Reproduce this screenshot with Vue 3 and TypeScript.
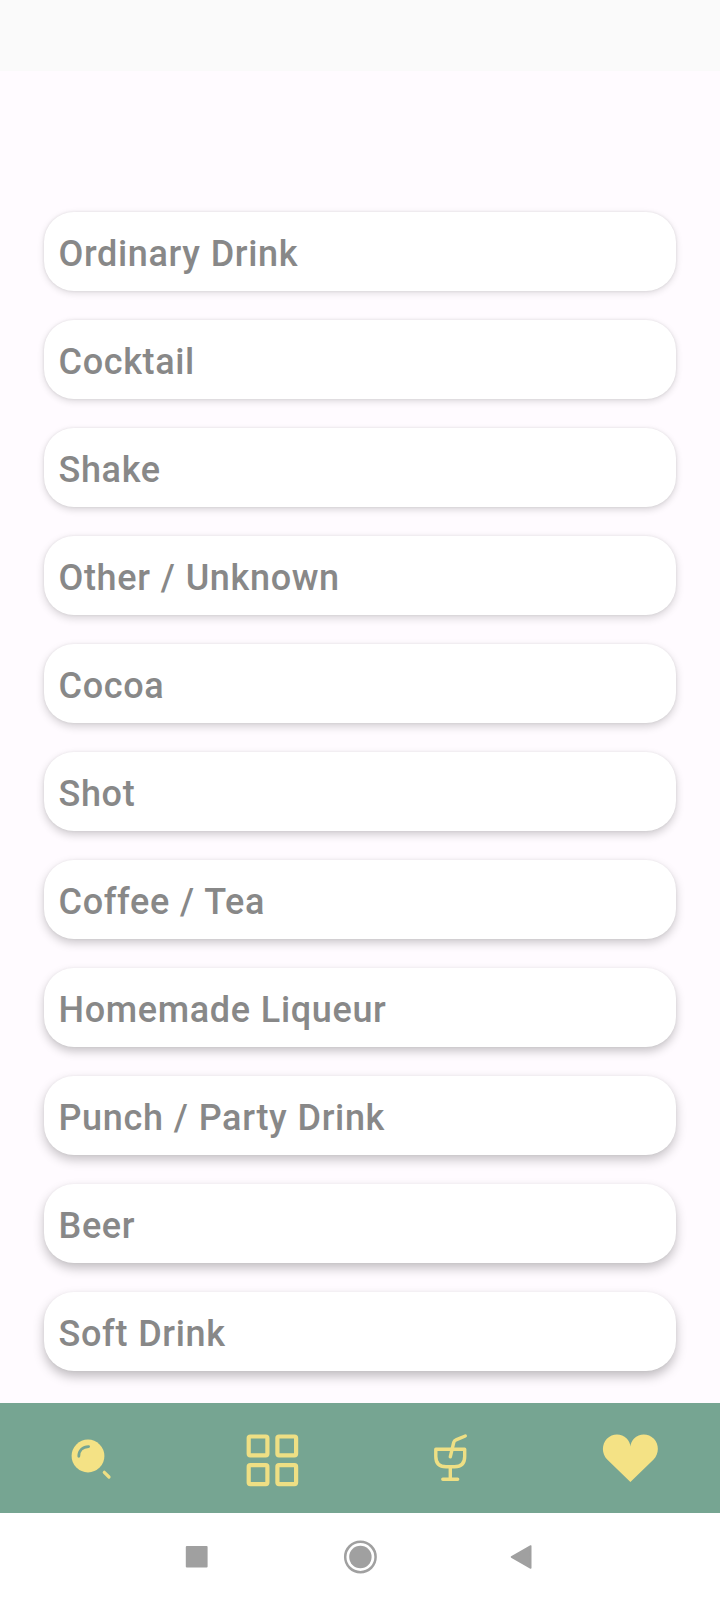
<script setup lang="ts">
const categories: string[] = [
  'Ordinary Drink',
  'Cocktail',
  'Shake',
  'Other / Unknown',
  'Cocoa',
  'Shot',
  'Coffee / Tea',
  'Homemade Liqueur',
  'Punch / Party Drink',
  'Beer',
  'Soft Drink',
]

function cardShadow(index: number): string {
  const t = index / (categories.length - 1)
  const y = 2 + t * 3.5
  const blur = 7 + t * 4
  const alpha = 0.13 + t * 0.12
  return `0 ${y}px ${blur}px rgba(0, 0, 0, ${alpha}), 0 0 3px rgba(0, 0, 0, ${0.09 - t * 0.05})`
}
</script>

<template>
  <div class="screen">
    <div class="status-bar"></div>
    <main class="list">
      <button
        v-for="(name, i) in categories"
        :key="name"
        class="card"
        :style="{ boxShadow: cardShadow(i) }"
      >
        {{ name }}
      </button>
    </main>

    <nav class="tabs">
      <a class="tab" aria-label="Search">
        <svg viewBox="0 0 180 110">
          <circle class="fill" cx="88" cy="53" r="16.4" />
          <path class="shine" d="M78.8 53.3C78.8 47.5 82.8 43.8 88.6 43.6" />
          <path class="line handle" d="M104.3 69.3L109 74" />
        </svg>
      </a>
      <a class="tab" aria-label="Categories">
        <svg viewBox="0 0 180 110">
          <g class="line tiles">
            <rect x="68.7" y="33.5" width="18.7" height="18.9" rx="1.6" />
            <rect x="97.4" y="33.5" width="18.7" height="18.9" rx="1.6" />
            <rect x="68.7" y="62.2" width="18.7" height="18.9" rx="1.6" />
            <rect x="97.4" y="62.2" width="18.7" height="18.9" rx="1.6" />
          </g>
        </svg>
      </a>
      <a class="tab" aria-label="Drinks">
        <svg viewBox="0 0 180 110">
          <g class="line glass">
            <path d="M75.8 46.2H104.7V53.5Q104.7 63.7 94.5 63.7H86Q75.8 63.7 75.8 53.5Z" />
            <path d="M90.3 64V76M82.8 76.3H97.7" />
            <path d="M90.3 53.8L93.7 39.5Q94.2 37.6 96 36.9L105.3 33" />
          </g>
        </svg>
      </a>
      <a class="tab" aria-label="Favourites">
        <svg viewBox="0 0 180 110">
          <path
            class="fill"
            d="M90.4 78.9L67.2 56.5C61.5 50.8 61.6 41.3 66.9 35.8C72.4 30 81.2 30 86.7 35.4C88.8 37.5 90.2 40.3 90.4 43.4C90.6 40.3 92 37.5 94.1 35.4C99.6 30 108.4 30 113.9 35.8C119.2 41.3 119.3 50.8 113.6 56.5Z"
          />
        </svg>
      </a>
    </nav>

    <footer class="system-nav">
      <svg viewBox="0 0 720 87">
        <rect x="185.8" y="33" width="21.8" height="21.6" rx="1" />
        <circle cx="360.4" cy="44" r="11.2" />
        <circle class="ring" cx="360.4" cy="44" r="15.2" />
        <path class="back" d="M511.5 44L530.7 33V55Z" />
      </svg>
    </footer>
  </div>
</template>

<style>
body {
  margin: 0;
}
</style>

<style scoped>
.screen {
  display: flex;
  flex-direction: column;
  width: 720px;
  height: 1600px;
  overflow: hidden;
  background: #fffbff;
  font-family: Roboto, sans-serif;
}
.status-bar {
  height: 71px;
  flex: none;
  background: #fafafa;
}
.list {
  flex: 1;
  display: flex;
  flex-direction: column;
  gap: 29px;
  padding: 141px 44px 0;
}
.card {
  flex: none;
  height: 79px;
  padding: 4px 14.5px 0;
  border: 0;
  border-radius: 30px;
  background: #fff;
  color: #888;
  font: 500 36px/42px Roboto, sans-serif;
  letter-spacing: 0.65px;
  word-spacing: 0.6px;
  text-align: left;
}
.tabs {
  flex: none;
  display: flex;
  height: 110px;
  background: #76a592;
}
.tab {
  flex: 1;
}
svg {
  display: block;
  width: 100%;
  height: 100%;
}
.fill {
  fill: #f4e285;
}
.line {
  fill: none;
  stroke: #eedf84;
  stroke-linecap: round;
  stroke-linejoin: round;
}
.handle {
  stroke-width: 3.2;
}
.tiles {
  stroke-width: 4.2;
}
.glass {
  stroke-width: 3.4;
}
.shine {
  fill: none;
  stroke: #76a592;
  stroke-width: 2.8;
  stroke-linecap: round;
}
.system-nav {
  flex: none;
  height: 87px;
  background: #fff;
  fill: #a0a0a0;
}
.ring {
  fill: none;
  stroke: #a0a0a0;
  stroke-width: 2.5;
}
.back {
  stroke: #a0a0a0;
  stroke-width: 1.6;
  stroke-linejoin: round;
}
</style>
